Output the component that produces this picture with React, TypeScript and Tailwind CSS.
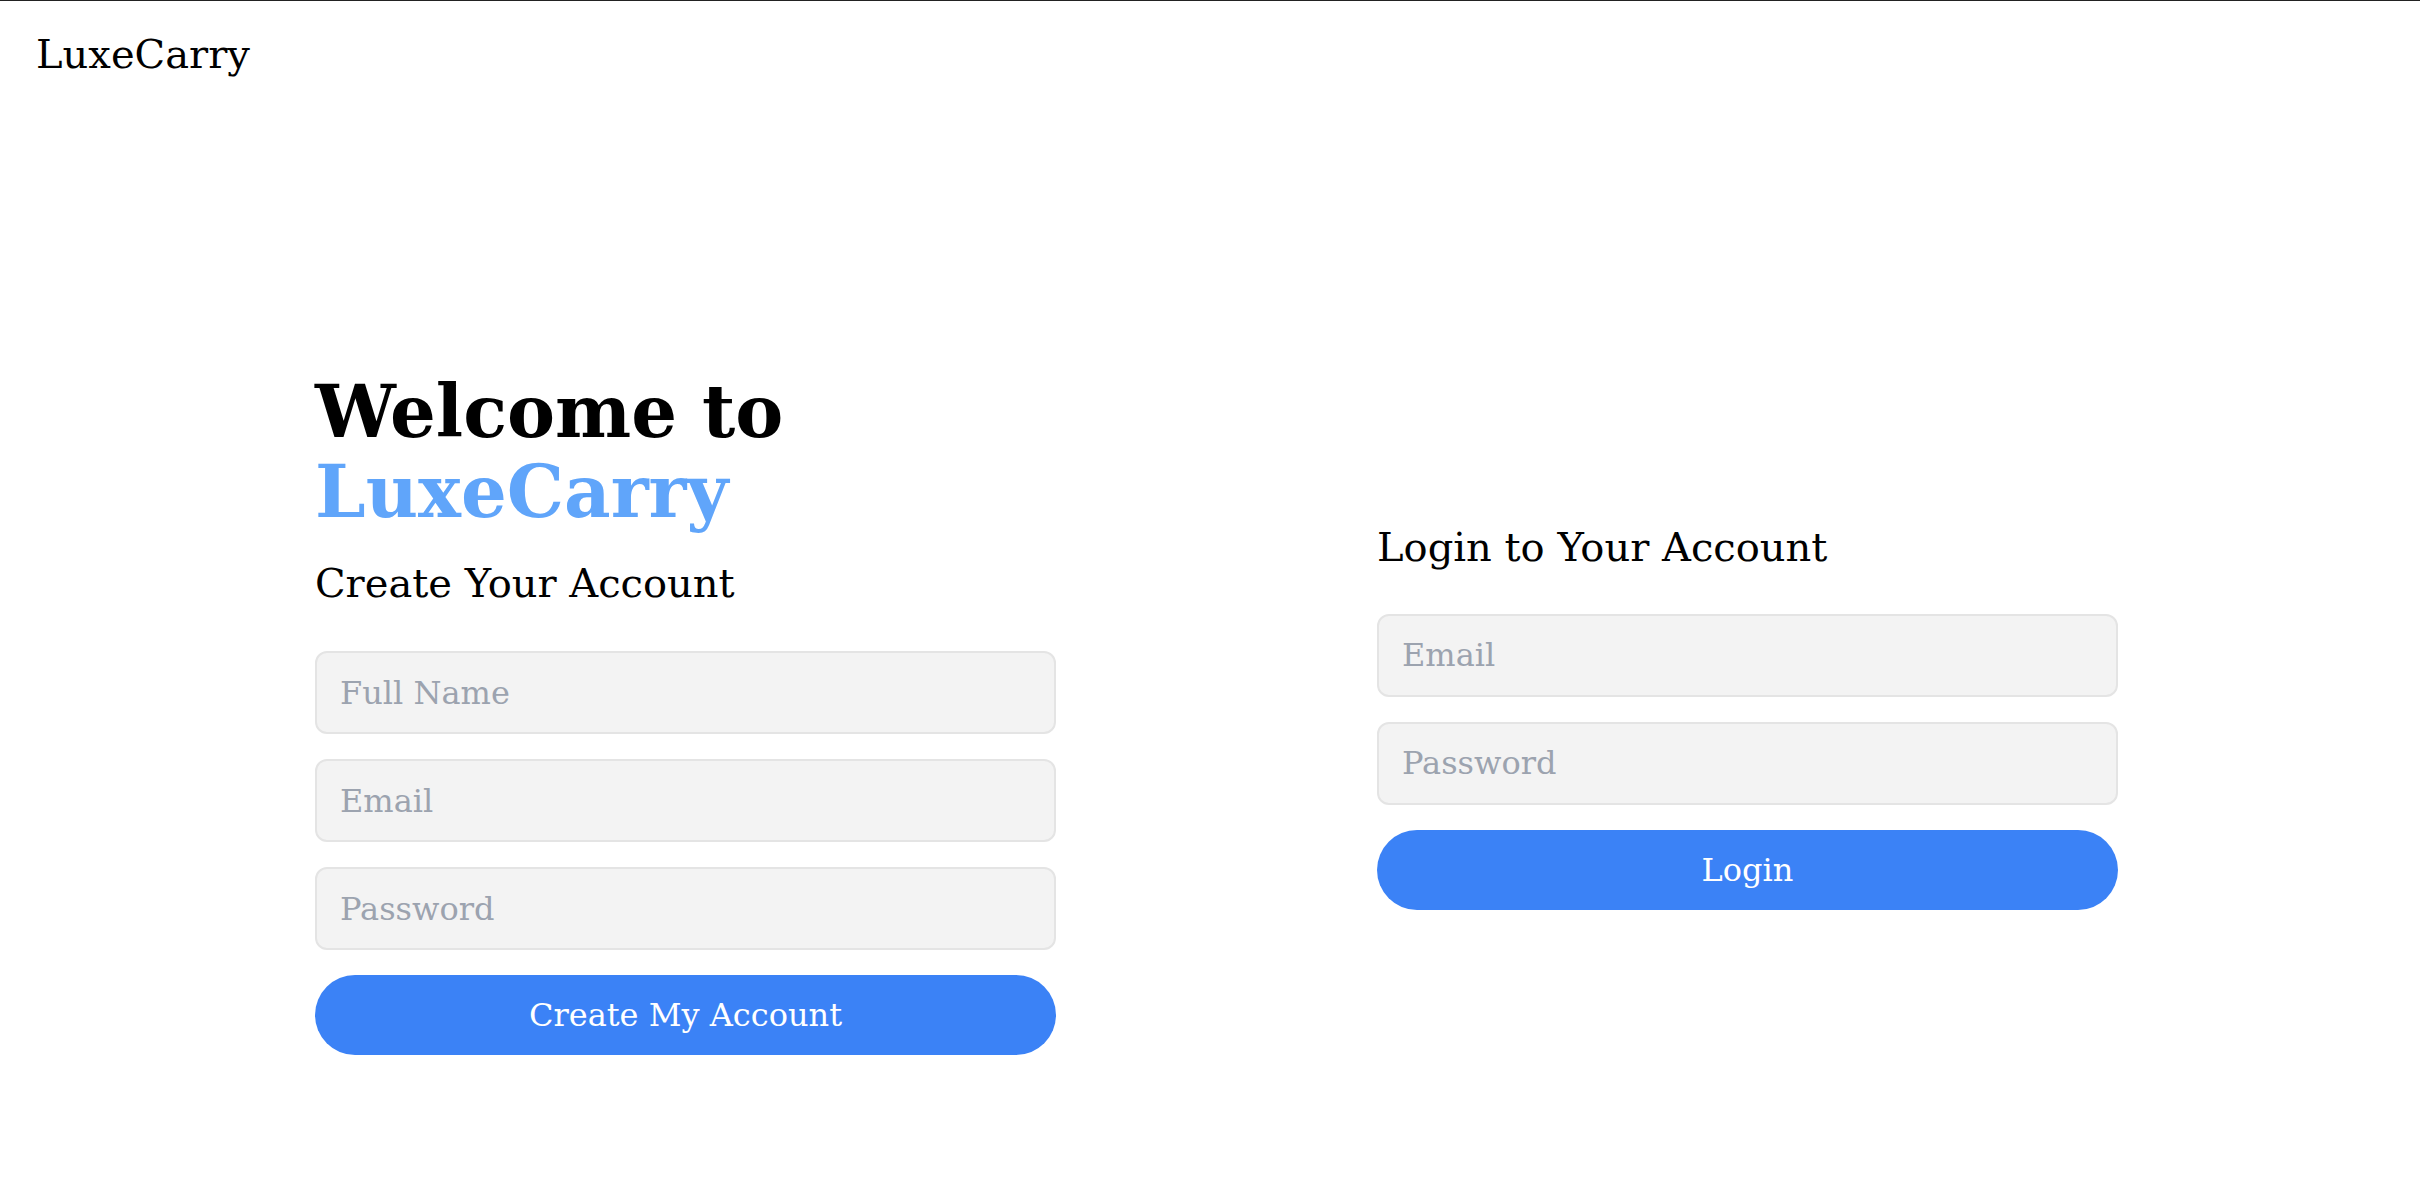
import React from "react";

const Field: React.FC<{ placeholder: string; type?: string }> = ({ placeholder, type = "text" }) => (
  <input
    type={type}
    placeholder={placeholder}
    className="h-[83px] w-full rounded-[12px] border-2 border-[#e4e4e4] bg-[#f3f3f3] px-[23px] text-[32px] text-black outline-none placeholder:text-[#9ca3af]"
  />
);

const SubmitButton: React.FC<{ label: string }> = ({ label }) => (
  <button className="h-[80px] w-full rounded-full bg-[#3b82f6] text-[32px] text-white">{label}</button>
);

function SignupForm() {
  return (
    <section className="flex w-[741px] flex-col">
      <h1 className="text-[72px] font-bold leading-[80px] text-black">
        Welcome to
        <span className="block text-[#60a5fa]">LuxeCarry</span>
      </h1>
      <h2 className="mt-[25px] text-[40px] leading-[53px] text-black">Create Your Account</h2>
      <form className="mt-[41px] flex flex-col gap-[25px]" onSubmit={(e) => e.preventDefault()}>
        <Field placeholder="Full Name" />
        <Field placeholder="Email" type="email" />
        <Field placeholder="Password" type="password" />
        <SubmitButton label="Create My Account" />
      </form>
    </section>
  );
}

function LoginForm() {
  return (
    <section className="flex w-[741px] flex-col pt-[3px]">
      <h2 className="text-[40px] leading-[53px] text-black">Login to Your Account</h2>
      <form className="mt-[40px] flex flex-col gap-[25px]" onSubmit={(e) => e.preventDefault()}>
        <Field placeholder="Email" type="email" />
        <Field placeholder="Password" type="password" />
        <SubmitButton label="Login" />
      </form>
    </section>
  );
}

export default function App() {
  return (
    <div className="min-h-screen bg-white font-['DejaVu_Serif',serif]">
      <nav className="border-t border-[#222] px-[36px] pt-[27px]">
        <span className="text-[40px] leading-[53px] text-black">LuxeCarry</span>
      </nav>
      <main className="flex items-center gap-[321px] pl-[315px] pt-[291px]">
        <SignupForm />
        <LoginForm />
      </main>
    </div>
  );
}
